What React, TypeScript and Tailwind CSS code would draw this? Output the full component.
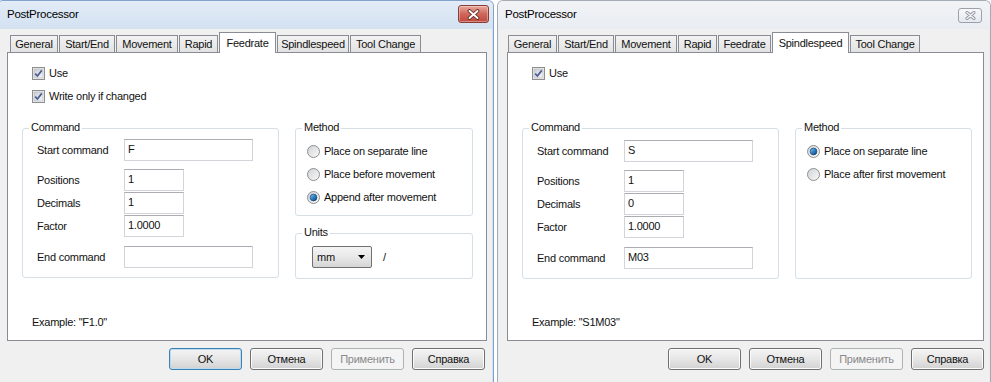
import type { ReactNode } from "react";

// ─── Types ────────────────────────────────────────────────────────────────────

type TabDef = { label: string; w: string };

const leftTabs: TabDef[] = [
  { label: "General",      w: "w-[48px]" },
  { label: "Start/End",    w: "w-[56px]" },
  { label: "Movement",     w: "w-[62px]" },
  { label: "Rapid",        w: "w-[39px]" },
  { label: "Feedrate",     w: "w-[57px]" },
  { label: "Spindlespeed", w: "w-[72px]" },
  { label: "Tool Change",  w: "w-[71px]" },
];

const rightTabs: TabDef[] = [
  { label: "General",      w: "w-[49px]" },
  { label: "Start/End",    w: "w-[56px]" },
  { label: "Movement",     w: "w-[62px]" },
  { label: "Rapid",        w: "w-[39px]" },
  { label: "Feedrate",     w: "w-[53px]" },
  { label: "Spindlespeed", w: "w-[77px]" },
  { label: "Tool Change",  w: "w-[70px]" },
];

// ─── Small controls ───────────────────────────────────────────────────────────

function CheckBox({ label }: { label: string }) {
  return (
    <div className="h-[23px] flex items-center pl-[10px]">
      <svg width="13" height="13" viewBox="0 0 13 13" className="shrink-0">
        <defs>
          <linearGradient id="cbFill" x1="0" y1="0" x2="1" y2="1">
            <stop offset="0" stopColor="#c9ccd2" />
            <stop offset="1" stopColor="#f7f7f7" />
          </linearGradient>
        </defs>
        <rect x="0.5" y="0.5" width="12" height="12" fill="#f5f5f5" stroke="#8e8f8f" />
        <rect x="2" y="2" width="9" height="9" fill="url(#cbFill)" stroke="#b9bdc4" strokeWidth="0.8" />
        <path d="M3.2 6.6 L5.4 9 L9.8 3.4" fill="none" stroke="#4a5f97" strokeWidth="1.7" />
      </svg>
      <span className="ml-[4px] leading-[13px]">{label}</span>
    </div>
  );
}

function Radio({ label, checked }: { label: string; checked?: boolean }) {
  return (
    <div className="h-[23px] flex items-center">
      <svg width="13" height="13" viewBox="0 0 13 13" className="shrink-0">
        <defs>
          <linearGradient id="rbFill" x1="0" y1="0" x2="1" y2="1">
            <stop offset="0" stopColor="#cfd1d4" />
            <stop offset="1" stopColor="#fbfbfb" />
          </linearGradient>
          <linearGradient id="rbDot" x1="0" y1="0" x2="1" y2="1">
            <stop offset="0" stopColor="#8fd0f7" />
            <stop offset="0.5" stopColor="#2a7fc4" />
            <stop offset="1" stopColor="#163f6a" />
          </linearGradient>
        </defs>
        <circle cx="6.5" cy="6.5" r="6" fill="url(#rbFill)" stroke="#8e8f8f" />
        {checked && <circle cx="6.5" cy="6.5" r="3.4" fill="url(#rbDot)" stroke="#1b4470" strokeWidth="0.7" />}
      </svg>
      <span className="ml-[4px] leading-[13px]">{label}</span>
    </div>
  );
}

function TextBox({ value, wide }: { value: string; wide?: boolean }) {
  return (
    <div
      className={`h-[22px] ${wide ? "w-[129px]" : "w-[60px]"} bg-white border border-[#d2d4d9] border-t-[#abadb3] flex items-center pl-[3px] pb-[2px] leading-[13px]`}
    >
      {value}
    </div>
  );
}

function Field({ label, value, wide, className = "" }: {
  label: string; value: string; wide?: boolean; className?: string;
}) {
  return (
    <div className={`flex items-center ${className}`}>
      <span className="w-[87px] leading-[13px]">{label}</span>
      <TextBox value={value} wide={wide} />
    </div>
  );
}

function GroupBox({ label, className = "", children }: {
  label: string; className?: string; children?: ReactNode;
}) {
  return (
    <div className={`relative border border-[#d5dfe5] rounded-[3px] ${className}`}>
      <span className="absolute -top-[8px] left-[6px] bg-white px-[2px] leading-[13px]">{label}</span>
      {children}
    </div>
  );
}

function DlgButton({ label, primary, disabled }: {
  label: string; primary?: boolean; disabled?: boolean;
}) {
  if (disabled) {
    return (
      <div className="w-[73px] h-[22px] rounded-[3px] border border-[#adb2b5] bg-[#f4f4f4] text-[#8a8a8a] flex items-center justify-center">
        {label}
      </div>
    );
  }
  return (
    <div
      className={`w-[73px] h-[22px] rounded-[3px] border bg-linear-to-b from-[#f4f4f4] via-[#e6e6e6] to-[#d2d2d2] flex items-center justify-center
        ${primary ? "border-[#3c7fb1] shadow-[inset_0_0_0_1px_#b9dcf3]" : "border-[#707070] shadow-[inset_0_0_0_1px_#fbfbfb]"}
      `}
    >
      {label}
    </div>
  );
}

// ─── Title bar close buttons ──────────────────────────────────────────────────

function CloseActive() {
  return (
    <div className="mt-[4px] mr-[4px] w-[31px] h-[18px] rounded-[3px] border border-[#8a3b33] bg-linear-to-b from-[#e6a99c] via-[#cf665a] to-[#c04a3f] shadow-[inset_0_0_0_1px_rgba(255,255,255,0.35)] flex items-center justify-center">
      <svg width="13" height="11" viewBox="0 0 13 11">
        <path d="M2.5 2 L10.5 9 M10.5 2 L2.5 9" stroke="#5b2620" strokeWidth="3.6" strokeLinecap="round" />
        <path d="M2.5 2 L10.5 9 M10.5 2 L2.5 9" stroke="#ffffff" strokeWidth="1.9" strokeLinecap="round" />
      </svg>
    </div>
  );
}

function CloseInactive() {
  return (
    <div className="mt-[7px] mr-[8px] w-[24px] h-[15px] rounded-[3px] border border-[#9aa1aa] bg-linear-to-b from-[#f7f8fa] to-[#e6e9ee] flex items-center justify-center">
      <svg width="11" height="9" viewBox="0 0 11 9">
        <path d="M2 1.5 L9 7.5 M9 1.5 L2 7.5" stroke="#8c939c" strokeWidth="3" strokeLinecap="round" />
        <path d="M2 1.5 L9 7.5 M9 1.5 L2 7.5" stroke="#f4f5f7" strokeWidth="1.4" strokeLinecap="round" />
      </svg>
    </div>
  );
}

// ─── Dialog shell ─────────────────────────────────────────────────────────────

function Dialog({ active, tabs, selected, tabOffset, titlePad, btnPad, width, children, example }: {
  active: boolean;
  tabs: TabDef[];
  selected: string;
  tabOffset: string;
  titlePad: string;
  btnPad: string;
  width: string;
  example: string;
  children: ReactNode;
}) {
  return (
    <div
      className={`${width} h-[382px] shrink-0 flex flex-col rounded-t-[6px] border border-b-0
        ${active ? "border-[#7fa3cc] bg-[#d3e1f1]" : "border-[#a3abb5] bg-[#e9edf2]"}
      `}
    >
      {/* Title bar */}
      <div
        className={`h-[28px] flex justify-between items-start rounded-t-[5px]
          ${active ? "bg-linear-to-b from-[#e3ecf7] to-[#d3e1f1]" : "bg-linear-to-b from-[#f1f3f6] to-[#e9edf2]"}
        `}
      >
        <span className={`mt-[6px] ${titlePad} text-[11.5px] leading-[14px] text-black`}>PostProcessor</span>
        {active ? <CloseActive /> : <CloseInactive />}
      </div>

      {/* Client */}
      <div className="flex-1 mx-[1px] bg-[#f0f0f0] pl-[8px] pr-[5px] pt-[3px]">
        <div className={`flex items-end h-[21px] gap-px relative z-10 -mb-px ${tabOffset}`}>
          {tabs.map((t) =>
            t.label === selected ? (
              <div
                key={t.label}
                className={`${t.w} h-[21px] shrink-0 bg-white border border-b-0 border-[#898c95] flex items-center justify-center whitespace-nowrap leading-[13px]`}
              >
                {t.label}
              </div>
            ) : (
              <div
                key={t.label}
                className={`${t.w} h-[18px] shrink-0 bg-linear-to-b from-[#f3f3f3] to-[#e2e2e2] border border-[#898c95] flex items-center justify-center whitespace-nowrap leading-[13px]`}
              >
                {t.label}
              </div>
            )
          )}
        </div>

        <div className="h-[289px] border border-[#898c95] bg-white flex flex-col pl-[14px] pt-[9px] pb-[11px]">
          {children}
          <div className="mt-auto pl-[10px] leading-[13px]">{example}</div>
        </div>

        <div className={`mt-[7px] flex justify-end gap-[8px] ${btnPad}`}>
          <DlgButton label="OK" primary={active} />
          <DlgButton label="Отмена" />
          <DlgButton label="Применить" disabled />
          <DlgButton label="Справка" />
        </div>
      </div>
    </div>
  );
}

// ─── Page ─────────────────────────────────────────────────────────────────────

export default function App() {
  return (
    <div className="w-[991px] h-[382px] overflow-hidden bg-white flex font-['Liberation_Sans',Arial,sans-serif] text-[11px] tracking-[-0.25px] text-[#111]">
      {/* Feedrate dialog (active, clipped at the left edge) */}
      <div className="w-[494px] shrink-0 overflow-hidden">
        <div className="-ml-[3px]">
          <Dialog
            active
            width="w-[497px]"
            tabs={leftTabs}
            selected="Feedrate"
            tabOffset="pl-[3px]"
            titlePad="pl-[9px]"
            btnPad="pr-[2px]"
            example={'Example: "F1.0"'}
          >
            <div className="h-[46px] flex flex-col">
              <CheckBox label="Use" />
              <CheckBox label="Write only if changed" />
            </div>

            <div className="mt-[20px] flex items-start gap-[16px]">
              <GroupBox label="Command" className="w-[257px] h-[150px] pl-[14px] pt-[10px]">
                <Field label="Start command" value="F" wide />
                <Field label="Positions" value="1" className="mt-[8px]" />
                <Field label="Decimals" value="1" className="mt-[1px]" />
                <Field label="Factor" value="1.0000" className="mt-[1px]" />
                <Field label="End command" value="" wide className="mt-[9px]" />
              </GroupBox>

              <div className="flex flex-col">
                <GroupBox label="Method" className="w-[178px] h-[88px] pl-[11px] pt-[11px]">
                  <Radio label="Place on separate line" />
                  <Radio label="Place before movement" />
                  <Radio label="Append after movement" checked />
                </GroupBox>

                <GroupBox label="Units" className="mt-[17px] w-[178px] h-[46px] pl-[16px] pt-[12px] flex items-start">
                  <div className="w-[60px] h-[22px] rounded-[2px] border border-[#707070] bg-linear-to-b from-[#f4f4f4] via-[#e8e8e8] to-[#d6d6d6] flex items-center justify-between pl-[4px] pr-[6px] leading-[13px]">
                    mm
                    <svg width="7" height="4" viewBox="0 0 7 4">
                      <path d="M0 0 H7 L3.5 4 Z" fill="#000" />
                    </svg>
                  </div>
                  <span className="ml-[11px] leading-[22px]">/</span>
                </GroupBox>
              </div>
            </div>
          </Dialog>
        </div>
      </div>

      <div className="w-[3px] shrink-0" />

      {/* Spindlespeed dialog (inactive) */}
      <Dialog
        active={false}
        width="w-[494px]"
        tabs={rightTabs}
        selected="Spindlespeed"
        tabOffset="pl-[1px]"
        titlePad="pl-[7px]"
        btnPad="pr-[0px]"
        example={'Example: "S1M03"'}
      >
        <div className="h-[46px] flex flex-col">
          <CheckBox label="Use" />
        </div>

        <div className="mt-[20px] flex items-start gap-[16px]">
          <GroupBox label="Command" className="w-[257px] h-[151px] pl-[14px] pt-[11px]">
            <Field label="Start command" value="S" wide />
            <Field label="Positions" value="1" className="mt-[8px]" />
            <Field label="Decimals" value="0" className="mt-[1px]" />
            <Field label="Factor" value="1.0000" className="mt-[1px]" />
            <Field label="End command" value="M03" wide className="mt-[9px]" />
          </GroupBox>

          <GroupBox label="Method" className="w-[177px] h-[151px] pl-[11px] pt-[11px]">
            <Radio label="Place on separate line" checked />
            <Radio label="Place after first movement" />
          </GroupBox>
        </div>
      </Dialog>
    </div>
  );
}
